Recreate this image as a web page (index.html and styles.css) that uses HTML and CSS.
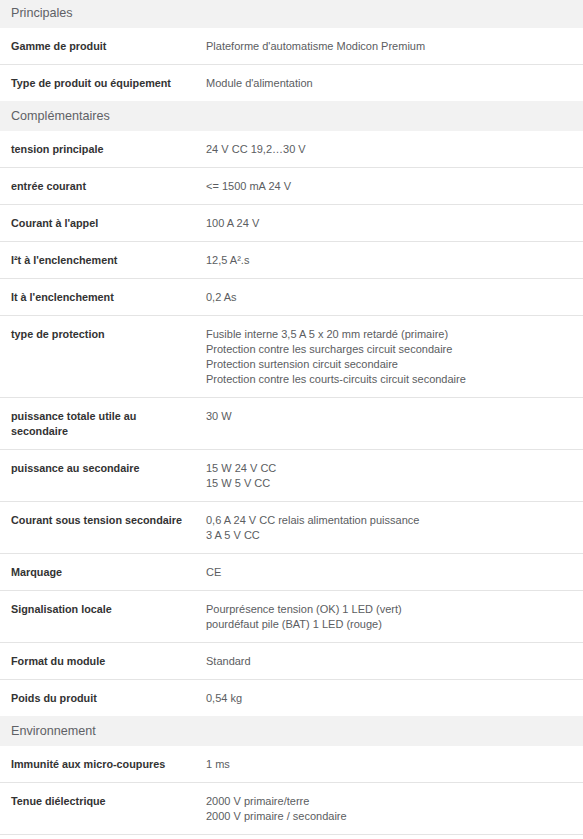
FILE: index.html
```html
<!DOCTYPE html>
<html lang="fr">
<head>
<meta charset="utf-8">
<title>Caractéristiques</title>
<link rel="stylesheet" href="styles.css">
</head>
<body>
<div class="specs">
  <section class="group">
    <h2 class="group-title">Principales</h2>
    <div class="row"><div class="label">Gamme de produit</div><div class="value">Plateforme d'automatisme Modicon Premium</div></div>
    <div class="row"><div class="label">Type de produit ou équipement</div><div class="value">Module d'alimentation</div></div>
  </section>
  <section class="group">
    <h2 class="group-title">Complémentaires</h2>
    <div class="row"><div class="label">tension principale</div><div class="value">24 V CC 19,2…30 V</div></div>
    <div class="row"><div class="label">entrée courant</div><div class="value">&lt;= 1500 mA 24 V</div></div>
    <div class="row"><div class="label">Courant à l'appel</div><div class="value">100 A 24 V</div></div>
    <div class="row"><div class="label">I²t à l'enclenchement</div><div class="value">12,5 A².s</div></div>
    <div class="row"><div class="label">It à l'enclenchement</div><div class="value">0,2 As</div></div>
    <div class="row"><div class="label">type de protection</div><div class="value">Fusible interne 3,5 A 5 x 20 mm retardé (primaire)<br>Protection contre les surcharges circuit secondaire<br>Protection surtension circuit secondaire<br>Protection contre les courts-circuits circuit secondaire</div></div>
    <div class="row"><div class="label">puissance totale utile au secondaire</div><div class="value">30 W</div></div>
    <div class="row"><div class="label">puissance au secondaire</div><div class="value">15 W 24 V CC<br>15 W 5 V CC</div></div>
    <div class="row"><div class="label">Courant sous tension secondaire</div><div class="value">0,6 A 24 V CC relais alimentation puissance<br>3 A 5 V CC</div></div>
    <div class="row"><div class="label">Marquage</div><div class="value">CE</div></div>
    <div class="row"><div class="label">Signalisation locale</div><div class="value">Pourprésence tension (OK) 1 LED (vert)<br>pourdéfaut pile (BAT) 1 LED (rouge)</div></div>
    <div class="row"><div class="label">Format du module</div><div class="value">Standard</div></div>
    <div class="row"><div class="label">Poids du produit</div><div class="value">0,54 kg</div></div>
  </section>
  <section class="group">
    <h2 class="group-title">Environnement</h2>
    <div class="row"><div class="label">Immunité aux micro-coupures</div><div class="value">1 ms</div></div>
    <div class="row last-shown"><div class="label">Tenue diélectrique</div><div class="value">2000 V primaire/terre<br>2000 V primaire / secondaire</div></div>
  </section>
</div>
</body>
</html>
```

FILE: styles.css
```css
html, body {
  margin: 0;
  padding: 0;
  background: #ffffff;
}

body {
  font-family: "Liberation Sans", Arial, sans-serif;
  font-size: 11px;
  line-height: 15px;
  color: #333333;
}

.specs {
  margin-top: -2px;
}

.group-title {
  margin: 0;
  height: 30px;
  line-height: 30px;
  padding: 0 11px;
  background: #f2f2f2;
  font-size: 12.6px;
  font-weight: normal;
  color: #5f6166;
}

.row {
  display: grid;
  grid-template-columns: 195px 1fr;
  padding: 11px 11px 10px;
  border-bottom: 1px solid #e4e4e4;
}

.group .row:last-child {
  border-bottom: none;
}

.group .row.last-shown {
  border-bottom: 1px solid #e4e4e4;
}

.label {
  font-weight: bold;
  font-size: 10.8px;
  color: #333333;
  padding-right: 20px;
}

.value {
  color: #5b5d61;
}
```
